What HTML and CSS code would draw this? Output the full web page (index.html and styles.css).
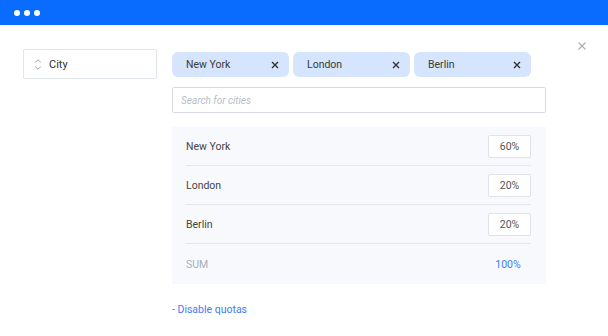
FILE: index.html
```html
<!DOCTYPE html>
<html lang="en">
<head>
    <meta charset="UTF-8">
    <meta name="viewport" content="width=device-width, initial-scale=1.0">
    <title>City quotas</title>
    <link rel="stylesheet" href="styles.css">
</head>
<body>

    <div class="window-bar">
        <span class="dot"></span>
        <span class="dot"></span>
        <span class="dot"></span>
    </div>

    <div class="main">
        <div class="sidebar">
            <div class="field-select">
                <svg class="sort-icon" viewBox="0 0 10 16">
                    <path d="M1.5 5.5 L5 2 L8.5 5.5 M1.5 10.5 L5 14 L8.5 10.5"/>
                </svg>
                <span>City</span>
            </div>
        </div>

        <div class="content">
            <div class="tags">
                <div class="tag"><span>New York</span><svg class="tag-x" viewBox="0 0 8 8"><path d="M1 1 L7 7 M7 1 L1 7"/></svg></div>
                <div class="tag"><span>London</span><svg class="tag-x" viewBox="0 0 8 8"><path d="M1 1 L7 7 M7 1 L1 7"/></svg></div>
                <div class="tag"><span>Berlin</span><svg class="tag-x" viewBox="0 0 8 8"><path d="M1 1 L7 7 M7 1 L1 7"/></svg></div>
            </div>

            <input type="text" class="search" placeholder="Search for cities">

            <div class="quota-panel">
                <div class="quota-row">
                    <span class="city-name">New York</span>
                    <div class="quota-box">60%</div>
                </div>
                <div class="quota-row">
                    <span class="city-name">London</span>
                    <div class="quota-box">20%</div>
                </div>
                <div class="quota-row">
                    <span class="city-name">Berlin</span>
                    <div class="quota-box">20%</div>
                </div>
                <div class="quota-row sum">
                    <span class="sum-label">SUM</span>
                    <span class="sum-value">100%</span>
                </div>
            </div>

            <a class="toggle-link" href="#">- Disable quotas</a>
        </div>

        <svg class="close-btn" viewBox="0 0 8 8"><path d="M0.5 0.5 L7.5 7.5 M7.5 0.5 L0.5 7.5"/></svg>
    </div>

</body>
</html>
```

FILE: styles.css
```css
/* Reset */
* {
    margin: 0;
    padding: 0;
    box-sizing: border-box;
}

body {
    width: 608px;
    height: 336px;
    background: #fff;
    font-family: 'Roboto', 'Liberation Sans', sans-serif;
    color: #333;
    overflow: hidden;
}

/* Window bar */
.window-bar {
    height: 25px;
    background: #0a6cff;
    display: flex;
    align-items: center;
    gap: 4px;
    padding-left: 14px;
}

.dot {
    width: 6px;
    height: 6px;
    border-radius: 50%;
    background: #fff;
}

/* Main area */
.main {
    position: relative;
    display: flex;
    padding: 24px 0 0 23px;
}

.sidebar {
    width: 134px;
}

.field-select {
    height: 30px;
    border: 1px solid #e1e5ec;
    border-radius: 1px;
    display: flex;
    align-items: center;
    padding-left: 10px;
    font-size: 11px;
    color: #333;
}

.sort-icon {
    width: 8px;
    height: 15px;
    margin-right: 7px;
    fill: none;
    stroke: #8d929e;
    stroke-width: 1.1;
}

.content {
    width: 374px;
    margin-left: 15px;
    padding-top: 3px;
}

/* Tags */
.tags {
    display: flex;
    gap: 4px;
}

.tag {
    width: 117px;
    height: 25px;
    background: #d5e5fd;
    border-radius: 6px;
    display: flex;
    align-items: center;
    justify-content: space-between;
    padding: 0 10px 0 14px;
    font-size: 10.5px;
    color: #3a3a3a;
}

.tag-x {
    width: 8px;
    height: 8px;
    stroke: #333;
    stroke-width: 1.4;
}

/* Search */
.search {
    display: block;
    width: 100%;
    height: 26px;
    margin-top: 10px;
    border: 1px solid #d6d9e0;
    border-radius: 2px;
    padding: 0 8px;
    font-family: inherit;
    font-size: 10px;
    outline: none;
}

.search::placeholder {
    color: #b9bdc7;
    font-style: italic;
}

/* Quota panel */
.quota-panel {
    margin-top: 14px;
    background: #f8f9fd;
    padding: 0 15px 0 14px;
}

.quota-row {
    height: 39px;
    display: flex;
    align-items: center;
    justify-content: space-between;
    border-bottom: 1px solid #e6e8ee;
    font-size: 10.5px;
}

.quota-row.sum {
    border-bottom: none;
    height: 40px;
}

.city-name {
    color: #444;
}

.quota-box {
    width: 43px;
    height: 23px;
    background: #fff;
    border: 1px solid #dfe2e8;
    border-radius: 2px;
    display: flex;
    align-items: center;
    justify-content: center;
    color: #555;
}

.sum-label {
    color: #a9adb8;
}

.sum-value {
    width: 43px;
    padding-right: 3px;
    text-align: center;
    color: #3d7bf7;
}

/* Link */
.toggle-link {
    display: inline-block;
    margin-top: 19px;
    font-size: 10.5px;
    color: #3d7bf7;
    text-decoration: none;
}

/* Close */
.close-btn {
    position: absolute;
    top: 17px;
    left: 578px;
    width: 8px;
    height: 8px;
    stroke: #a8adb8;
    stroke-width: 1.1;
}
```
